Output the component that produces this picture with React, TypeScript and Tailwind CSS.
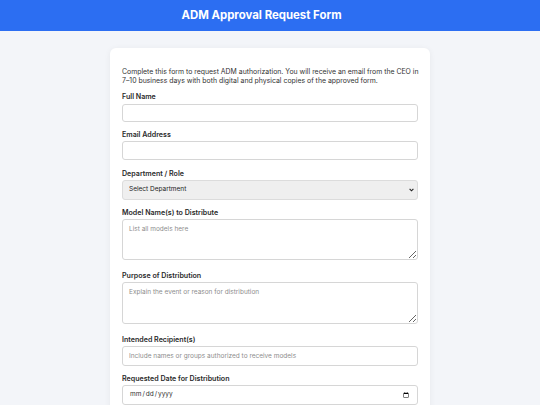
import React from "react";

const labelCls = "block text-[7.1px] leading-[9px] font-semibold text-[#2a2a2a] mb-[2.5px]";
const inputCls =
  "block w-full rounded-[3px] border border-[#d6d6d6] bg-white px-[6px] text-[6.5px] text-[#333] placeholder:text-[#8d8d8d] focus:outline-none";

export default function App() {
  return (
    <div
      className="min-h-screen bg-[#f3f5f9] text-[#222]"
      style={{ fontFamily: "Inter, 'Liberation Sans', sans-serif" }}
    >
      <header className="h-[31px] bg-[#2c6ef2] flex items-center justify-center pr-[17px]">
        <h1 className="text-[11.4px] font-bold text-white">ADM Approval Request Form</h1>
      </header>

      <main className="flex justify-center pt-[17px] pb-10">
        <form className="w-[320px] rounded-[6px] bg-white px-[12px] pt-[19px] pb-6 shadow-[0_1px_6px_rgba(0,0,0,0.06)]">
          <p className="text-[6.9px] leading-[9px] text-[#333] mb-[7px] whitespace-nowrap">
            Complete this form to request ADM authorization. You will receive an email from the CEO in
            <br />
            7–10 business days with both digital and physical copies of the approved form.
          </p>

          <div className="mb-[8px]">
            <label className={labelCls}>Full Name</label>
            <input type="text" className={`${inputCls} h-[18px]`} />
          </div>

          <div className="mb-[9px]">
            <label className={labelCls}>Email Address</label>
            <input type="email" className={`${inputCls} h-[18.5px]`} />
          </div>

          <div className="mb-[7.5px]">
            <label className={labelCls}>Department / Role</label>
            <div className="relative">
              <select className="block w-full h-[20px] appearance-none rounded-[3px] border border-[#dcdcdc] bg-[#efefef] px-[6px] text-[6.5px] text-[#222] focus:outline-none">
                <option>Select Department</option>
                <option>Sales</option>
                <option>Marketing</option>
                <option>Operations</option>
              </select>
              <svg
                className="pointer-events-none absolute right-[4px] top-1/2 -translate-y-1/2"
                width="5"
                height="4"
                viewBox="0 0 5 4"
              >
                <path d="M0.6 0.8 L2.5 2.8 L4.4 0.8" fill="none" stroke="#222" strokeWidth="1.1" />
              </svg>
            </div>
          </div>

          <div className="mb-[10.5px]">
            <label className={labelCls}>Model Name(s) to Distribute</label>
            <textarea
              placeholder="List all models here"
              className={`${inputCls} h-[41px] py-[5px] leading-[9px]`}
            />
          </div>

          <div className="mb-[10.5px]">
            <label className={labelCls}>Purpose of Distribution</label>
            <textarea
              placeholder="Explain the event or reason for distribution"
              className={`${inputCls} h-[42px] py-[5px] leading-[9px]`}
            />
          </div>

          <div className="mb-[7.5px]">
            <label className={labelCls}>Intended Recipient(s)</label>
            <input
              type="text"
              placeholder="Include names or groups authorized to receive models"
              className={`${inputCls} h-[20px]`}
            />
          </div>

          <div className="mb-[8px]">
            <label className={labelCls}>Requested Date for Distribution</label>
            <input type="date" className={`${inputCls} h-[20px]`} />
          </div>
        </form>
      </main>
    </div>
  );
}
